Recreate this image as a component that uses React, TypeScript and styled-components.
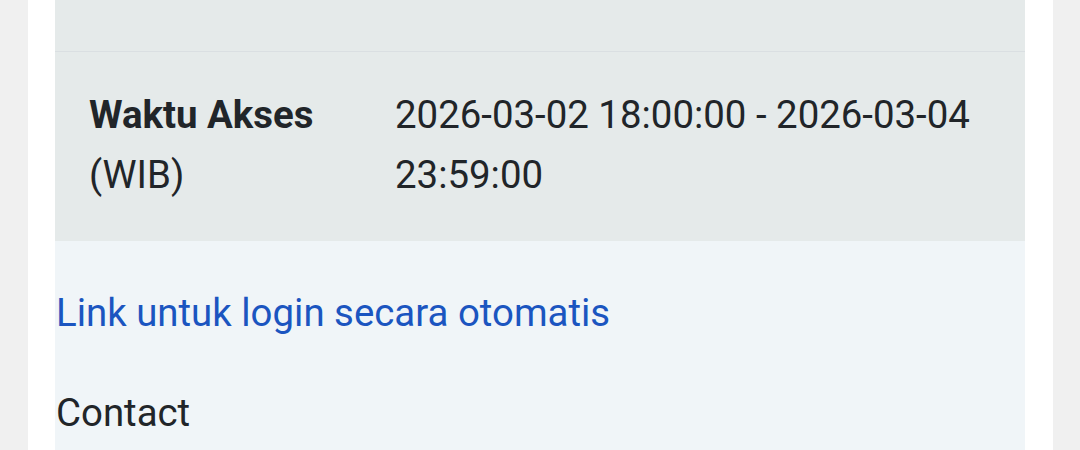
import React from "react";
import styled, { createGlobalStyle } from "styled-components";

const GlobalStyle = createGlobalStyle`
  html, body {
    margin: 0;
    padding: 0;
    background: #f0f0f0;
    font-family: Roboto, "Liberation Sans", sans-serif;
    color: #212529;
  }
`;

const App = () => {
  return (
    <>
      <GlobalStyle />
      <Page>
        <Card>
          <Panel>
            <Row $empty />
            <Row>
              <Label>
                <b>Waktu Akses</b>
                <br />
                (WIB)
              </Label>
              <Value>2026-03-02 18:00:00 - 2026-03-04 23:59:00</Value>
            </Row>
            <Footer>
              <AutoLink href="#">Link untuk login secara otomatis</AutoLink>
              <Contact>Contact</Contact>
            </Footer>
          </Panel>
        </Card>
      </Page>
    </>
  );
};

export default App;

const Page = styled.div`
  padding: 0 27px 0 28px;
  height: 450px;
  overflow: hidden;
`;

const Card = styled.div`
  background: #ffffff;
  padding: 0 28px 0 27px;
  height: 100%;
`;

const Panel = styled.div`
  display: flex;
  flex-direction: column;
  height: 100%;
  background: #f0f5f8;
`;

const Row = styled.div<{ $empty?: boolean }>`
  display: grid;
  grid-template-columns: 306px 1fr;
  background: #e5eaea;
  height: ${(p) => (p.$empty ? "51px" : "auto")};
  border-bottom: ${(p) => (p.$empty ? "1px solid #dadfe2" : "none")};
  font-size: 38.4px;
  line-height: 60px;
`;

const Label = styled.div`
  padding: 33px 0 36px 34px;

  b {
    font-weight: 700;
  }
`;

const Value = styled.div`
  padding: 33px 34px 36px 34px;
`;

const Footer = styled.div`
  display: flex;
  flex-direction: column;
  align-items: flex-start;
  gap: 40px;
  padding: 42px 0 0 1px;
  font-size: 38.4px;
  line-height: 60px;
`;

const AutoLink = styled.a`
  color: #1b55c0;
  text-decoration: none;
`;

const Contact = styled.div`
  color: #212529;
`;
